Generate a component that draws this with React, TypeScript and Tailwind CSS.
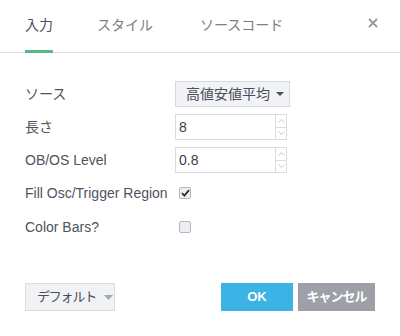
import { ReactNode } from 'react';

const FONT = '"Liberation Sans", "Noto Sans CJK JP", sans-serif';

const tabs = [
	{ name: '入力', active: true },
	{ name: 'スタイル', active: false },
	{ name: 'ソースコード', active: false },
];

function Row({ label, children }: { label: string; children: ReactNode }) {
	return (
		<div className="flex items-center h-[26px]">
			<div className="w-[150px] text-[14px] text-[#4f535d]">{label}</div>
			{children}
		</div>
	);
}

function NumberInput({ value }: { value: string }) {
	return (
		<div className="flex h-[26px]">
			<div className="w-[101px] h-full border border-[#d9dce1] flex items-center pl-[3px] text-[14px] text-[#3b3f47]">
				{value}
			</div>
			<div className="w-[11px] h-full border border-l-0 border-[#d9dce1] flex flex-col">
				<div className="flex-1 flex items-center justify-center border-b border-[#d9dce1]">
					<svg width="7" height="4" viewBox="0 0 7 4">
						<path d="M0.5 3.5 L3.5 0.5 L6.5 3.5" fill="none" stroke="#b5b8be" strokeWidth="0.8" />
					</svg>
				</div>
				<div className="flex-1 flex items-center justify-center">
					<svg width="7" height="4" viewBox="0 0 7 4">
						<path d="M0.5 0.5 L3.5 3.5 L6.5 0.5" fill="none" stroke="#b5b8be" strokeWidth="0.8" />
					</svg>
				</div>
			</div>
		</div>
	);
}

function Checkbox({ checked }: { checked: boolean }) {
	return (
		<div className="ml-[4px] w-[12px] h-[12px] rounded-[2px] border border-[#b4b7bd] bg-[#eceef1] flex items-center justify-center">
			{checked && (
				<svg width="9" height="8" viewBox="0 0 9 8">
					<path d="M1 4.2 L3.4 6.6 L8 1.2" fill="none" stroke="#2f3238" strokeWidth="1.8" />
				</svg>
			)}
		</div>
	);
}

export default function App() {
	return (
		<div
			className="w-[401px] h-[336px] bg-white border-r border-[#d3d6db] flex flex-col"
			style={{ fontFamily: FONT }}>
			{/* tabs */}
			<div className="h-[53px] border-b border-[#dcdfe3] flex pl-[25px] pr-[22px]">
				{tabs.map((tab, i) => (
					<div
						key={tab.name}
						className={`relative h-full flex items-center pb-px text-[14px] ${
							i === 1 ? 'ml-[44px]' : i === 2 ? 'ml-[47px]' : ''
						} ${tab.active ? 'text-[#4d525b]' : 'text-[#7a7e87]'}`}>
						{tab.name}
						{tab.active && (
							<div className="absolute left-0 right-0 -bottom-px h-[3px] bg-[#53b987]" />
						)}
					</div>
				))}
				<div className="ml-auto mt-[18px]">
					<svg width="10" height="10" viewBox="0 0 10 10">
						<path d="M1 1 L9 9 M9 1 L1 9" stroke="#9598a0" strokeWidth="1.8" />
					</svg>
				</div>
			</div>

			{/* inputs */}
			<div className="flex flex-col gap-[7px] pt-[28px] pl-[25px]">
				<Row label="ソース">
					<div className="h-[26px] w-[115px] border border-[#d6d9de] bg-[#f1f3f6] flex items-center pl-[10px] text-[14px] text-[#4a4e57] whitespace-nowrap">
						高値安値平均
						<svg className="ml-[6px]" width="8" height="4" viewBox="0 0 8 4">
							<path d="M0 0 L8 0 L4 4 Z" fill="#4a4e57" />
						</svg>
					</div>
				</Row>
				<Row label="長さ">
					<NumberInput value="8" />
				</Row>
				<Row label="OB/OS Level">
					<NumberInput value="0.8" />
				</Row>
				<Row label="Fill Osc/Trigger Region">
					<Checkbox checked />
				</Row>
				<div className="mt-px">
					<Row label="Color Bars?">
						<Checkbox checked={false} />
					</Row>
				</div>
			</div>

			{/* footer */}
			<div className="flex items-center mt-[43px] pl-[25px] pr-[25px]">
				<div className="shrink-0 h-[28px] w-[90px] border border-[#d9dce1] bg-[#f0f2f5] flex items-center pl-[11px] text-[13px] tracking-[-1.2px] text-[#4a4e57] whitespace-nowrap">
					デフォルト
					<svg className="ml-[8px] shrink-0" width="9" height="5" viewBox="0 0 9 5">
						<path d="M0 0 L9 0 L4.5 5 Z" fill="#a3a6ad" />
					</svg>
				</div>
				<div className="ml-auto shrink-0 h-[28px] w-[72px] bg-[#3cb3e4] flex items-center justify-center text-[13px] font-bold text-white">
					OK
				</div>
				<div className="ml-[5px] shrink-0 h-[28px] w-[77px] bg-[#9da0a7] flex items-center justify-center text-[13px] tracking-[-1px] font-bold text-white whitespace-nowrap">
					キャンセル
				</div>
			</div>
		</div>
	);
}
